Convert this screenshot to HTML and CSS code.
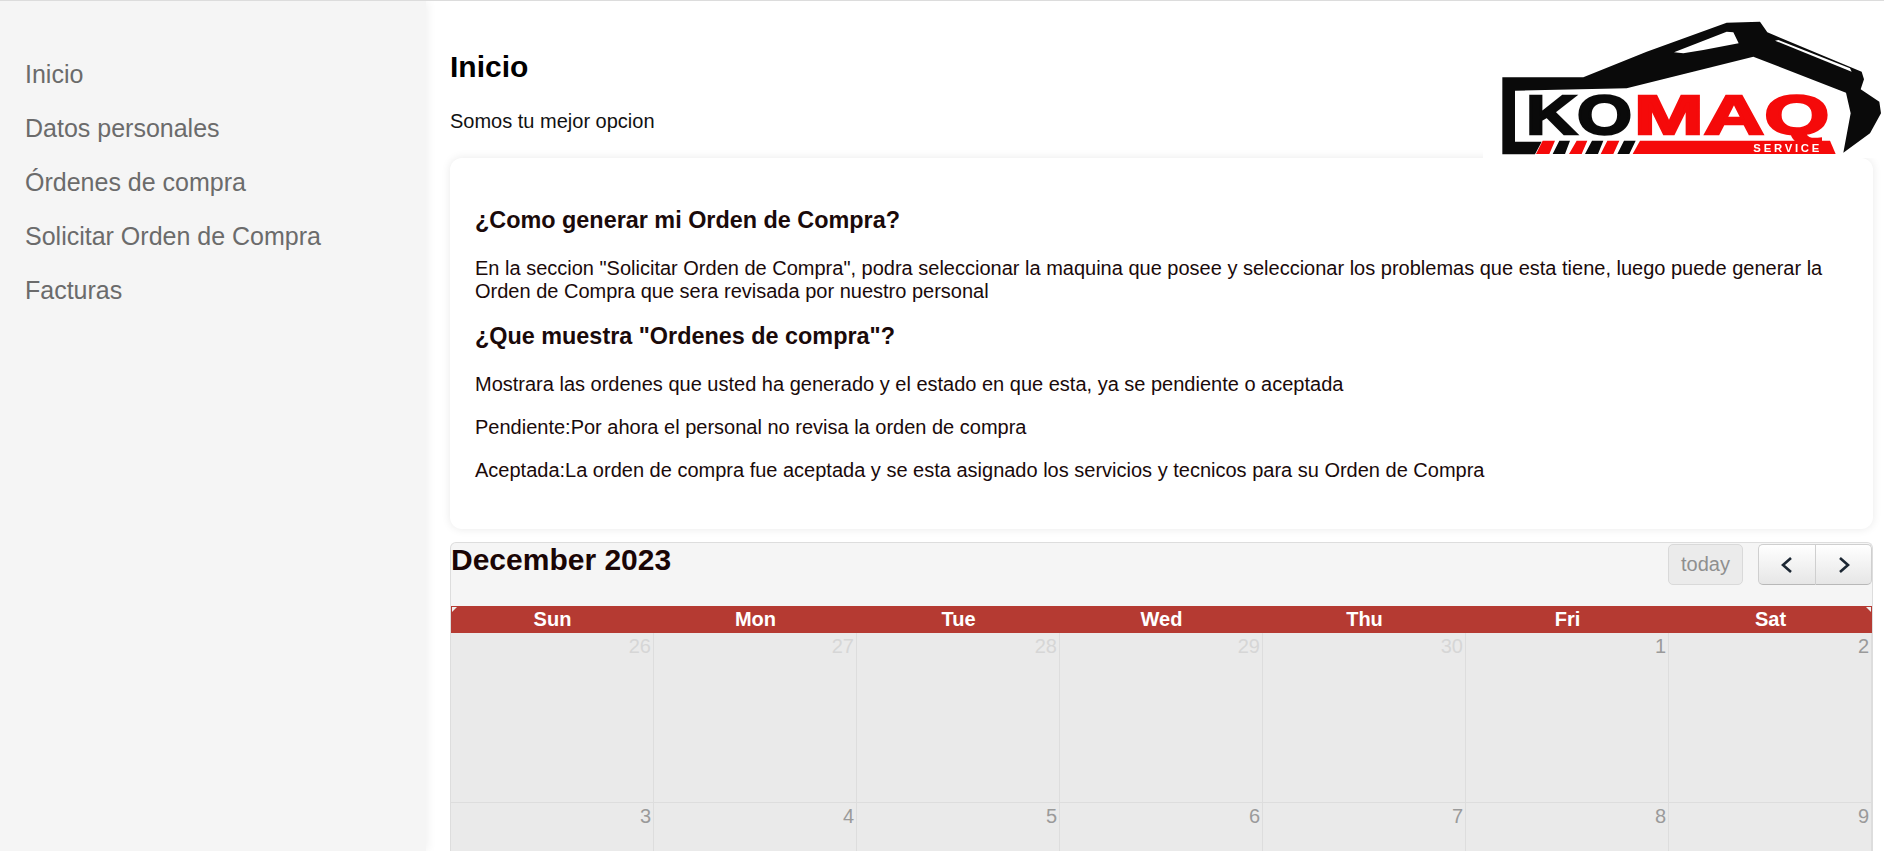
FILE: index.html
```html
<!DOCTYPE html>
<html lang="es">
<head>
<meta charset="utf-8">
<title>Inicio</title>
<link rel="stylesheet" href="styles.css">
</head>
<body>
<div class="app">
  <nav class="sidebar">
    <a class="nav-link" href="#">Inicio</a>
    <a class="nav-link" href="#">Datos personales</a>
    <a class="nav-link" href="#">Órdenes de compra</a>
    <a class="nav-link" href="#">Solicitar Orden de Compra</a>
    <a class="nav-link" href="#">Facturas</a>
  </nav>
  <main class="main">
    <h1 class="page-title">Inicio</h1>
    <p class="page-sub">Somos tu mejor opcion</p>
    <section class="card">
      <h2 class="card-heading">¿Como generar mi Orden de Compra?</h2>
      <p class="card-text">En la seccion "Solicitar Orden de Compra", podra seleccionar la maquina que posee y seleccionar los problemas que esta tiene, luego puede generar la Orden de Compra que sera revisada por nuestro personal</p>
      <h2 class="card-heading">¿Que muestra "Ordenes de compra"?</h2>
      <p class="card-text">Mostrara las ordenes que usted ha generado y el estado en que esta, ya se pendiente o aceptada</p>
      <p class="card-text">Pendiente:Por ahora el personal no revisa la orden de compra</p>
      <p class="card-text">Aceptada:La orden de compra fue aceptada y se esta asignado los servicios y tecnicos para su Orden de Compra</p>
    </section>
    <section class="calendar">
      <div class="cal-toolbar">
        <h2 class="cal-title">December 2023</h2>
        <div class="cal-actions">
          <button class="btn-today" type="button">today</button>
          <div class="btn-group">
            <button class="btn-nav" type="button" aria-label="prev"><svg class="chev" viewBox="0 0 16 20"><path d="M12 3 L4 10 L12 17"/></svg></button>
            <button class="btn-nav" type="button" aria-label="next"><svg class="chev" viewBox="0 0 16 20"><path d="M4 3 L12 10 L4 17"/></svg></button>
          </div>
        </div>
      </div>
      <div class="cal-head">
        <span>Sun</span><span>Mon</span><span>Tue</span><span>Wed</span><span>Thu</span><span>Fri</span><span>Sat</span>
      </div>
      <div class="cal-grid">
        <div class="day other">26</div><div class="day other">27</div><div class="day other">28</div><div class="day other">29</div><div class="day other">30</div><div class="day">1</div><div class="day">2</div>
        <div class="day">3</div><div class="day">4</div><div class="day">5</div><div class="day">6</div><div class="day">7</div><div class="day">8</div><div class="day">9</div>
      </div>
    </section>
  </main>
</div>
<div class="logo">
  <svg class="logo-svg" viewBox="39 3 1203 471">
    <path class="lk" fill-rule="evenodd" d="M97 232 L340 232 L530 155 L770 68 L870 65 L892 97 L1175 215 L1182 238 L1172 268 L1228 305 L1233 340 L1200 400 L1120 458 L1142 340 L1128 278 L850 170 L470 265 L135 272 L135 425 L215 425 L195 463 L97 463 Z M612 157 L770 95 L790 97 L806 130 L700 150 L640 160 Z"/>
    <path class="lw" d="M915 122 L1145 215 L1140 205 L925 120 Z"/>
    <text class="lt-k" x="168" y="403" textLength="318" lengthAdjust="spacingAndGlyphs">KO</text>
    <text class="lt-r" x="492" y="403" textLength="586" lengthAdjust="spacingAndGlyphs">MAQ</text>
    <path class="lr" d="M218 422 L255 422 L238 462 L198 462 Z M320 422 L352 422 L335 462 L297 462 Z M412 422 L448 422 L430 462 L392 462 Z"/>
    <path class="lk" d="M268 422 L300 422 L285 462 L248 462 Z M366 422 L400 422 L384 462 L345 462 Z M462 422 L497 422 L478 462 L442 462 Z"/>
    <path class="lr" d="M510 422 L1080 422 L1097 462 L488 462 Z"/>
    <text class="lt-s" x="850" y="456" textLength="198" lengthAdjust="spacing">SERVICE</text>
  </svg>
</div>
</body>
</html>
```
FILE: styles.css
```css
* { box-sizing: border-box; }
html, body { margin: 0; height: 100%; overflow: hidden; }
body {
  font-family: "Liberation Sans", Arial, sans-serif;
  font-size: 20px;
  color: #1a0a0a;
  background: #fff;
  border-top: 1px solid #dcdcdc;
}
.app { display: flex; height: 100%; }
.sidebar {
  flex: 0 0 426px;
  background: #f5f5f5;
  box-shadow: 1px 0 10px rgba(0, 0, 0, 0.07);
  padding-top: 46px;
  display: flex;
  flex-direction: column;
}
.nav-link {
  display: block;
  height: 54px;
  line-height: 54px;
  padding-left: 25px;
  font-size: 25px;
  color: #6b6b6b;
  text-decoration: none;
}
.main { flex: 1; min-width: 0; padding: 0 11px 0 24px; }
.page-title {
  margin: 48px 0 0;
  font-size: 30px;
  line-height: 36px;
  font-weight: 700;
  color: #000;
}
.page-sub { margin: 25px 0 0; line-height: 23px; color: #111; }
.card {
  margin-top: 25px;
  height: 371px;
  padding: 49px 25px 0;
  background: #fff;
  border-radius: 12px;
  box-shadow: 0 0 10px rgba(0, 0, 0, 0.09);
}
.card-heading {
  margin: 0 0 24px;
  font-size: 23.4px;
  line-height: 26px;
  font-weight: 700;
}
.card-text { margin: 0 0 20px; line-height: 23px; }
.card-text + .card-heading { margin-top: 3px; }
.calendar {
  margin-top: 13px;
  background: #f5f5f5;
  border: 1px solid #dddddd;
  border-bottom: 0;
  border-radius: 6px 6px 0 0;
}
.cal-toolbar {
  height: 63px;
  display: flex;
  justify-content: space-between;
  align-items: flex-start;
}
.cal-title {
  margin: 0;
  font-size: 30px;
  line-height: 34px;
  font-weight: 700;
  color: #1a0505;
}
.cal-actions { display: flex; gap: 15px; padding-top: 1px; }
.btn-today {
  width: 75px;
  height: 41px;
  padding: 0;
  font: inherit;
  color: #8f8f8f;
  background: #ebebeb;
  border: 1px solid #d9d9d9;
  border-radius: 5px;
}
.btn-group { display: flex; }
.btn-nav {
  width: 57px;
  height: 41px;
  padding: 0;
  display: flex;
  align-items: center;
  justify-content: center;
  background: linear-gradient(#ffffff, #e6e6e6);
  border: 1px solid #cfcfcf;
  border-bottom-color: #b8b8b8;
}
.btn-nav:first-child { border-radius: 5px 0 0 5px; border-right: 0; }
.btn-nav:last-child { border-radius: 0 5px 5px 0; }
.chev { width: 16px; height: 20px; }
.chev path { fill: none; stroke: #1c2733; stroke-width: 2.6; }
.cal-head {
  position: relative;
  display: grid;
  grid-template-columns: repeat(7, 1fr);
  height: 27px;
  background: #b53a32;
  color: #fff;
  font-weight: 700;
  line-height: 27px;
  text-align: center;
}
.cal-head::before,
.cal-head::after {
  content: "";
  position: absolute;
  top: 1px;
  width: 0;
  height: 0;
  border-top: 5px solid #f0f0f0;
}
.cal-head::before { left: 1px; border-right: 5px solid transparent; }
.cal-head::after { right: 1px; border-left: 5px solid transparent; }
.cal-grid { display: grid; grid-template-columns: repeat(7, 1fr); }
.day {
  height: 170px;
  padding: 1px 2px 0 0;
  text-align: right;
  font-size: 20px;
  line-height: 24px;
  color: #9a9a9a;
  background: #eaeaea;
  border-right: 1px solid #dddddd;
  border-bottom: 1px solid #dddddd;
}
.day.other { color: #d6d6d6; }
.logo {
  position: absolute;
  top: 1px;
  right: 0;
  width: 401px;
  height: 157px;
  background: #fff;
}
.logo-svg { display: block; width: 401px; height: 157px; filter: blur(0.5px); }
.lk { fill: #0a0a0a; }
.lr { fill: #f50a0a; }
.lw { fill: #fff; }
.lt-k, .lt-r {
  font-family: "Liberation Sans", Arial, sans-serif;
  font-size: 166px;
  font-weight: 700;
  stroke-width: 7px;
}
.lt-k { fill: #0a0a0a; stroke: #0a0a0a; }
.lt-r { fill: #f50a0a; stroke: #f50a0a; }
.lt-s {
  font-family: "Liberation Sans", Arial, sans-serif;
  font-size: 34px;
  font-weight: 700;
  fill: #fff;
}
```
